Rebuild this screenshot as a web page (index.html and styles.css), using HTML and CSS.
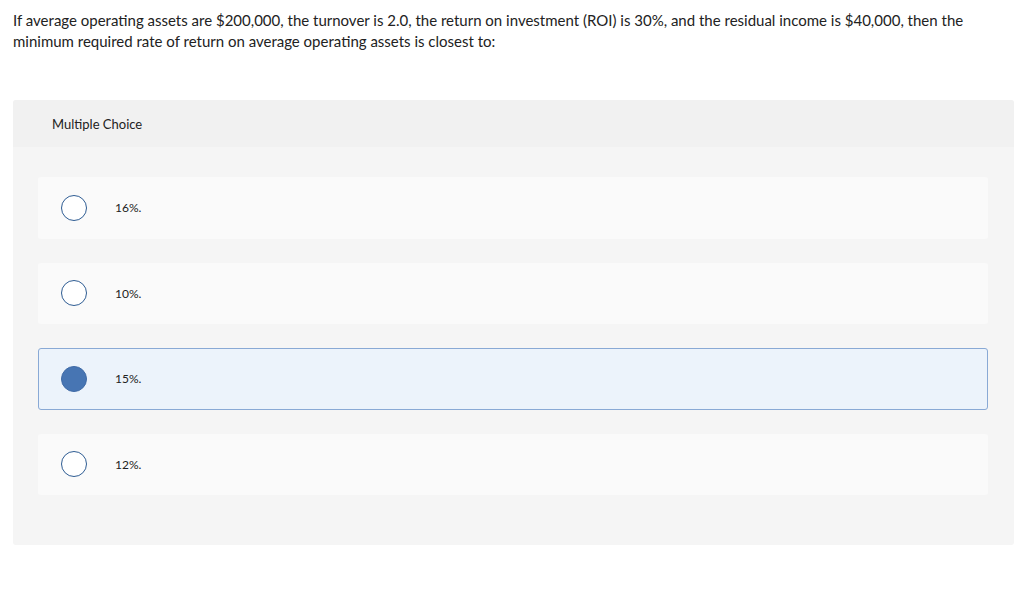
FILE: index.html
```html
<!DOCTYPE html>
<html>
<head>
<meta charset="utf-8">
<link rel="stylesheet" href="styles.css">
</head>
<body>
<div class="page">
  <p class="question">If average operating assets are $200,000, the turnover is 2.0, the return on investment (ROI) is 30%, and the residual income is $40,000, then the minimum required rate of return on average operating assets is closest to:</p>
  <div class="panel">
    <div class="panel-head">Multiple Choice</div>
    <div class="panel-body">
      <div class="option"><span class="radio"></span><span class="label">16%.</span></div>
      <div class="option"><span class="radio"></span><span class="label">10%.</span></div>
      <div class="option selected"><span class="radio"></span><span class="label">15%.</span></div>
      <div class="option"><span class="radio"></span><span class="label">12%.</span></div>
    </div>
  </div>
</div>
</body>
</html>
```

FILE: styles.css
```css
html, body {
  margin: 0;
  padding: 0;
  background: #ffffff;
}
body {
  font-family: Lato, "Liberation Sans", sans-serif;
  color: #222222;
}
.page {
  padding: 10px 10px 0 13px;
}
.question {
  margin: 0;
  font-size: 15px;
  line-height: 21px;
  width: 985px;
  height: 42px;
}
.panel {
  margin-top: 48px;
  width: 1001px;
  border-radius: 3px;
  overflow: hidden;
  background: #f5f5f5;
}
.panel-head {
  background: #f1f1f1;
  height: 47px;
  display: flex;
  align-items: center;
  padding-left: 39px;
  font-size: 13px;
  color: #222;
}
.panel-body {
  padding: 30px 26px 50px 25px;
  display: flex;
  flex-direction: column;
  gap: 24px;
}
.option {
  height: 61.5px;
  box-sizing: border-box;
  background: #fafafa;
  border-radius: 3px;
  display: flex;
  align-items: center;
  padding-left: 23px;
}
.option.selected {
  background: #ecf3fb;
  border: 1px solid #89a9d5;
  padding-left: 22px;
}
.radio {
  width: 26px;
  height: 26px;
  box-sizing: border-box;
  border: 1.3px solid #2e5c93;
  border-radius: 50%;
  background: #ffffff;
  flex: none;
}
.selected .radio {
  background: #4775b3;
  border-color: #3f6aa6;
}
.label {
  margin-left: 28px;
  font-size: 12px;
  color: #222;
}
```
